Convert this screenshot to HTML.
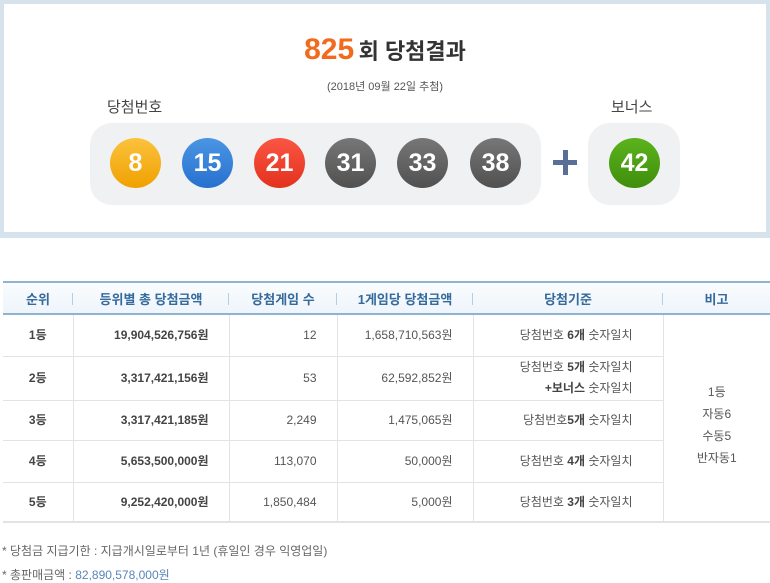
<!DOCTYPE html>
<html><head><meta charset="utf-8"><style>
*{margin:0;padding:0;box-sizing:border-box}
body{width:770px;height:582px;background:#fff;font-family:"Liberation Sans","Noto Sans CJK KR",sans-serif;position:relative;overflow:hidden;color:#555}
.top{position:absolute;left:0;top:0;width:770px;height:238px;border:4px solid #d6e2ec;border-bottom-width:6px;background:#fff}
.a{position:absolute}
.ball{position:absolute;width:51px;height:50px;border-radius:50%;color:#fff;font-weight:bold;font-size:25px;line-height:50px;text-align:center;font-family:"Liberation Sans",sans-serif}
table{position:absolute;left:3px;top:281px;width:767px;border-collapse:collapse;font-size:12px}
th{height:32px;background:linear-gradient(#fafcfe,#eef5fb);color:#356a9c;font-size:13px;border-top:2px solid #8fb3d3;border-bottom:2px solid #8fb3d3;font-weight:bold;position:relative}
th.s:after{content:"";position:absolute;right:0;top:10px;height:12px;border-right:1px solid #b8cfe2}
td{border-bottom:1px solid #e3e3e3;border-right:1px solid #e3e3e3;color:#555;text-align:right;padding-right:20px;vertical-align:middle;line-height:16px}
td.c{text-align:center;padding:0}
td.last{border-right:none}
b{color:#444}
</style></head><body>
<div class="top"></div>
<div class="a" style="left:0;top:33px;width:770px;text-align:center;white-space:nowrap"><span style="color:#f26b1d;font-size:30px;font-weight:bold">825</span> <span style="font-size:22px;color:#333;font-weight:bold">회 당첨결과</span></div>
<div class="a" style="left:0;top:78px;width:770px;text-align:center;font-size:11px;color:#555">(2018년 09월 22일 추첨)</div>
<div class="a" style="left:107px;top:96px;font-size:15px;color:#444">당첨번호</div>
<div class="a" style="left:611px;top:96px;font-size:15px;color:#444">보너스</div>
<div class="a" style="left:90px;top:123px;width:451px;height:82px;background:#f0f1f3;border-radius:22px"></div>
<div class="a" style="left:588px;top:123px;width:92px;height:82px;background:#f0f1f3;border-radius:22px"></div>
<div class="ball" style="left:110px;top:138px;background:linear-gradient(#fbc23d,#f0a100)">8</div>
<div class="ball" style="left:182px;top:138px;background:linear-gradient(#4b95e4,#2771cf)">15</div>
<div class="ball" style="left:254px;top:138px;background:linear-gradient(#fb5543,#e3321e)">21</div>
<div class="ball" style="left:325px;top:138px;background:linear-gradient(#777,#505050)">31</div>
<div class="ball" style="left:397px;top:138px;background:linear-gradient(#777,#505050)">33</div>
<div class="ball" style="left:470px;top:138px;background:linear-gradient(#777,#505050)">38</div>
<div class="a" style="left:553px;top:160px;width:24px;height:5px;background:#5a6f95"></div>
<div class="a" style="left:563px;top:150px;width:5px;height:25px;background:#5a6f95"></div>
<div class="ball" style="left:609px;top:138px;background:linear-gradient(#5cb31c,#3f8e0c)">42</div>
<table>
<tr><th class="s" style="width:70px">순위</th><th class="s" style="width:156px">등위별 총 당첨금액</th><th class="s" style="width:108px">당첨게임 수</th><th class="s" style="width:136px">1게임당 당첨금액</th><th class="s" style="width:190px">당첨기준</th><th>비고</th></tr>
<tr style="height:42px"><td class="c"><b>1등</b></td><td><b>19,904,526,756원</b></td><td>12</td><td>1,658,710,563원</td><td style="padding-right:30px">당첨번호 <b>6개</b> 숫자일치</td><td class="c last" rowspan="5" style="line-height:22px;padding-top:14px;border-bottom:2px solid #e3e3e3">1등<br>자동6<br>수동5<br>반자동1</td></tr>
<tr style="height:44px"><td class="c"><b>2등</b></td><td><b>3,317,421,156원</b></td><td>53</td><td>62,592,852원</td><td style="padding-right:30px;line-height:21px">당첨번호 <b>5개</b> 숫자일치<br><b>+보너스</b> 숫자일치</td></tr>
<tr style="height:40px"><td class="c"><b>3등</b></td><td><b>3,317,421,185원</b></td><td>2,249</td><td>1,475,065원</td><td style="padding-right:30px">당첨번호<b>5개</b> 숫자일치</td></tr>
<tr style="height:42px"><td class="c"><b>4등</b></td><td><b>5,653,500,000원</b></td><td>113,070</td><td>50,000원</td><td style="padding-right:30px">당첨번호 <b>4개</b> 숫자일치</td></tr>
<tr style="height:40px"><td class="c" style="border-bottom:2px solid #e3e3e3"><b>5등</b></td><td style="border-bottom:2px solid #e3e3e3"><b>9,252,420,000원</b></td><td style="border-bottom:2px solid #e3e3e3">1,850,484</td><td style="border-bottom:2px solid #e3e3e3">5,000원</td><td style="padding-right:30px;border-bottom:2px solid #e3e3e3">당첨번호 <b>3개</b> 숫자일치</td></tr>
</table>
<div class="a" style="left:2px;top:542px;font-size:12px;color:#666">* 당첨금 지급기한 : 지급개시일로부터 1년 (휴일인 경우 익영업일)</div>
<div class="a" style="left:2px;top:566px;font-size:12px;color:#666">* 총판매금액 : <span style="color:#5a86b8">82,890,578,000원</span></div>
</body></html>
